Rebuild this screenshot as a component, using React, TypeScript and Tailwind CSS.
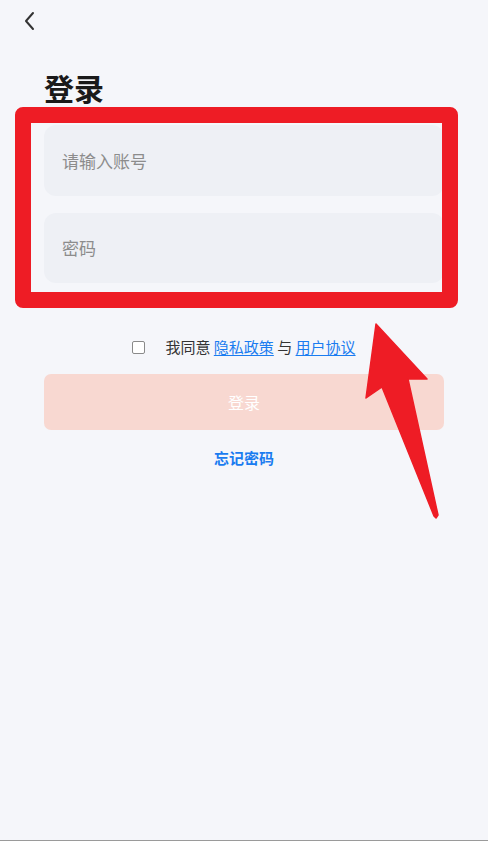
import React from "react";

export default function App() {
  return (
    <div
      className="relative w-[488px] h-[841px] overflow-hidden bg-[#f5f6fa] border-b border-[#9a9a9a]"
      style={{ fontFamily: '"Noto Sans CJK SC", "Noto Sans", sans-serif' }}
    >
      {/* header */}
      <div className="h-[42px] flex items-center pl-[22px]">
        <svg width="16" height="20" viewBox="0 0 16 20" fill="none">
          <path d="M11 2 L4 10 L11 18" stroke="#333" strokeWidth="2" strokeLinecap="round" strokeLinejoin="round" />
        </svg>
      </div>

      <div className="px-[44px]">
        <h1 className="mt-[25px] text-[30px] leading-[40px] font-bold text-[#1a1a1a]">登录</h1>

        <div className="mt-[18px] flex flex-col gap-[17px]">
          <div className="h-[71px] rounded-[12px] bg-[#eef0f5] flex items-center px-[18px]">
            <span className="text-[17px] text-[#8c8c8c]">请输入账号</span>
          </div>
          <div className="h-[70px] rounded-[12px] bg-[#eef0f5] flex items-center px-[18px]">
            <span className="text-[17px] text-[#8c8c8c]">密码</span>
          </div>
        </div>

        <div className="mt-[54px] flex items-center justify-center h-[20px]">
          <span className="w-[13px] h-[13px] border border-[#8a8a8a] rounded-[2px] bg-white" />
          <span className="ml-[20px] text-[15px] text-[#333]">
            我同意 <span className="text-[#1a7cf0] underline underline-offset-2">隐私政策</span> 与{" "}
            <span className="text-[#1a7cf0] underline underline-offset-2">用户协议</span>
          </span>
        </div>

        <div className="mt-[17px] h-[56px] rounded-[7px] bg-[#f8d8d1] flex items-center justify-center">
          <span className="text-[16px] text-white">登录</span>
        </div>

        <div className="mt-[17px] flex justify-center">
          <span className="text-[15px] font-bold text-[#1a7cf0]">忘记密码</span>
        </div>
      </div>

      {/* annotation box */}
      <div className="absolute left-[15px] top-[107px] w-[443px] h-[201px] border-[16px] border-[#ee1c25] rounded-[8px]" />

      {/* annotation arrow */}
      <svg className="absolute left-0 top-0" width="488" height="841" viewBox="0 0 488 841">
        <polygon
          points="376,324 427,379 408,379 438,515 436,518 434,516 382,387 366,398"
          fill="#ee1c25"
          stroke="#ee1c25"
          strokeWidth="1.5"
          strokeLinejoin="round"
        />
      </svg>
    </div>
  );
}
